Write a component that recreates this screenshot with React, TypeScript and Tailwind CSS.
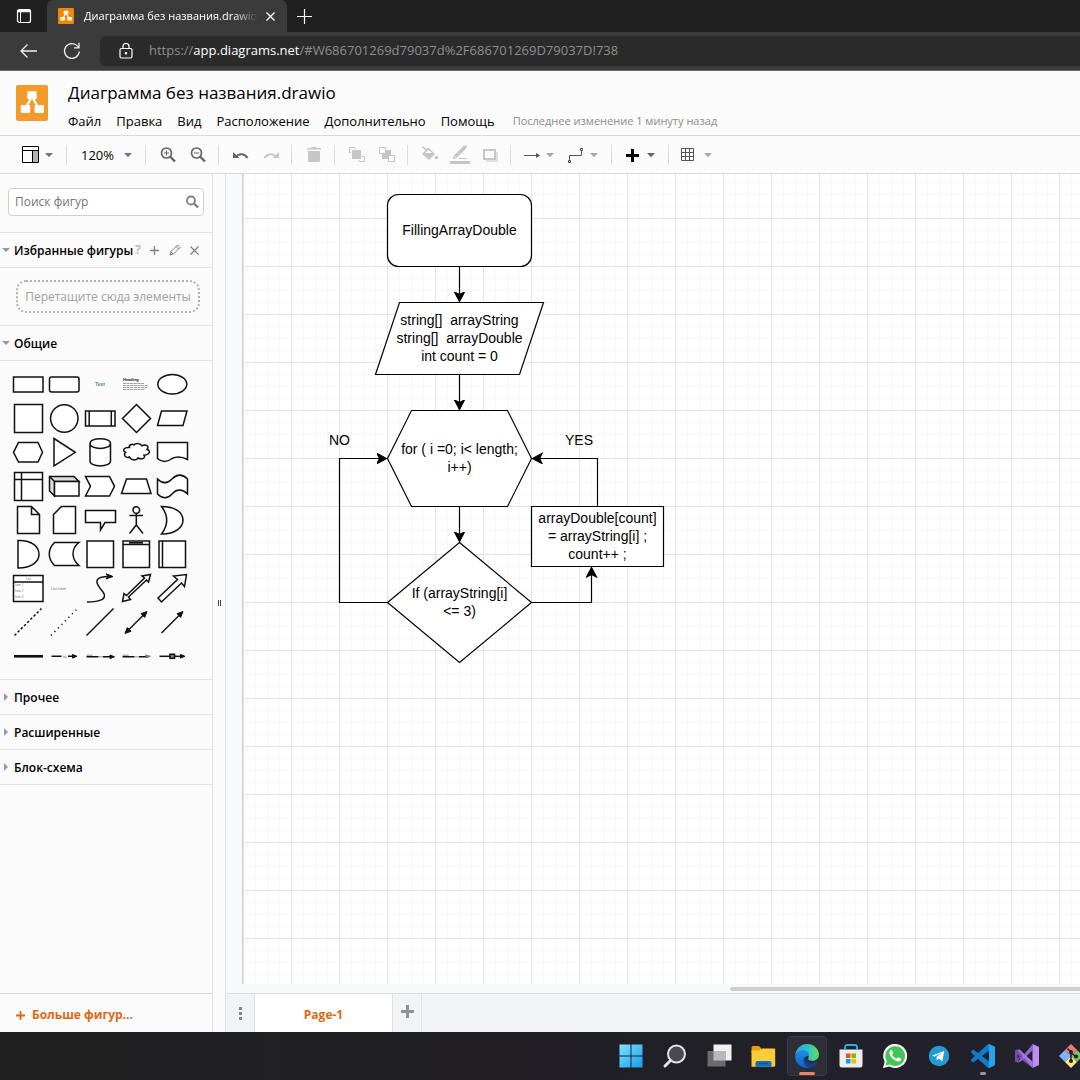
import React, { useState } from "react";

const INK = "#111";

function DrawioMark({ className, bg }: { className: string; bg: string }) {
  return (
    <svg className={className} viewBox="0 0 32 36" preserveAspectRatio="none" aria-hidden="true">
      <rect width="32" height="36" rx="2" fill={bg} />
      <path d="M15.8 12 9.5 23M16.2 12l6.3 11" stroke="#fff" strokeWidth="2.2" fill="none" />
      <rect x="11.3" y="6.3" width="9.4" height="8" rx="1.4" fill="#fff" />
      <rect x="4.8" y="20" width="9.4" height="8" rx="1.4" fill="#fff" />
      <rect x="18.6" y="20" width="9.4" height="8" rx="1.4" fill="#fff" />
    </svg>
  );
}

function Caret({ tone = "text-[#a8a8a8]" }: { tone?: string }) {
  return (
    <svg className={`h-2 w-2 shrink-0 ${tone}`} viewBox="0 0 8 8" aria-hidden="true">
      <path d="M0 2h8L4 6.3z" fill="currentColor" />
    </svg>
  );
}

function BrowserChrome() {
  return (
    <div className="bg-[#3b3b3b] text-white">
      <div className="flex h-8 items-stretch bg-[#202020]">
        <button aria-label="Вкладки" className="flex w-[47px] shrink-0 items-center justify-center">
          <svg width="16" height="16" viewBox="0 0 16 16" fill="none" stroke="#fff" aria-hidden="true">
            <rect x="1.5" y="1.5" width="13" height="13" rx="2" strokeWidth="1.2" />
            <path d="M1.5 3.5h13M1.5 2.5h13" strokeWidth="1.6" />
            <path d="M4.5 4v10" strokeWidth="1" />
          </svg>
        </button>
        <div className="flex w-60 items-center rounded-t-md bg-[#3b3b3b] pl-[11px]">
          <DrawioMark className="h-4 w-4 shrink-0" bg="#f08705" />
          <span className="ml-[10px] w-[174px] whitespace-nowrap text-[11px] [mask-image:linear-gradient(to_right,#000_86%,transparent)]">
            Диаграмма без названия.drawio
          </span>
          <button aria-label="Закрыть вкладку" className="ml-2">
            <svg width="9" height="9" viewBox="0 0 9 9" stroke="#fff" strokeWidth="1.3" aria-hidden="true">
              <path d="m.5.5 8 8m0-8-8 8" />
            </svg>
          </button>
        </div>
        <button aria-label="Новая вкладка" className="flex w-[35px] items-center justify-center">
          <svg width="15" height="15" viewBox="0 0 15 15" stroke="#fff" strokeWidth="1.2" aria-hidden="true">
            <path d="M7.5 0v15M0 7.5h15" />
          </svg>
        </button>
      </div>
      <div className="flex h-[39px] items-center border-b border-[#6b6b6b]">
        <button aria-label="Назад" className="flex w-14 shrink-0 items-center justify-center">
          <svg width="17" height="14" viewBox="0 0 17 14" fill="none" stroke="#eee" strokeWidth="1.3" aria-hidden="true">
            <path d="M17 7H1M7.5.5 1 7l6.500 6.500" />
          </svg>
        </button>
        <button aria-label="Обновить" className="flex w-8 shrink-0 items-center justify-center">
          <svg width="18" height="18" viewBox="0 0 18 18" fill="none" stroke="#eee" strokeWidth="1.3" aria-hidden="true">
            <path d="M16.300 9.500A7.400 7.400 0 1 1 14.600 4.200L16 5.800M16 .8v5h-5" />
          </svg>
        </button>
        <div className="ml-3 flex h-[30px] grow items-center rounded-l-md bg-[#2b2b2b] pl-[19px]">
          <svg className="shrink-0" width="14" height="16" viewBox="0 0 14 16" fill="none" stroke="#fff" strokeWidth="1.2" aria-hidden="true">
            <rect x="1" y="5.500" width="12" height="9.500" rx="1.500" />
            <path d="M4 5.500V3.500a3 3 0 0 1 6 0v2" />
            <circle cx="7" cy="10.300" r=".7" fill="#fff" />
          </svg>
          <a href="#diagram" className="ml-4 whitespace-nowrap text-[13px] text-[#8e8e8e]">
            https://<span className="text-white">app.diagrams.net</span>/#W686701269d79037d%2F686701269D79037D!738
          </a>
        </div>
      </div>
    </div>
  );
}

const MENUS = ["Файл", "Правка", "Вид", "Расположение", "Дополнительно", "Помощь"];

function AppHeader() {
  return (
    <header className="flex h-[65px] items-start border-b border-[#d9d9d9] pl-4">
      <DrawioMark className="mt-[14px] h-9 w-8 shrink-0" bg="#f29a2c" />
      <div className="ml-5 pt-2">
        <h1 className="text-[17px] leading-7 text-black">Диаграмма без названия.drawio</h1>
        <nav className="flex items-center gap-[15px] whitespace-nowrap text-[13px] leading-7">
          {MENUS.map((m) => (
            <button key={m}>{m}</button>
          ))}
          <span className="pl-[3px] text-[11px] text-[#8c8c8c]">Последнее изменение 1 минуту назад</span>
        </nav>
      </div>
    </header>
  );
}

function Group({ children }: { children: React.ReactNode }) {
  return <div className="flex h-5 items-center border-l border-[#dcdcdc] pr-[5px] pl-[7px]">{children}</div>;
}

function Tool({ label, tone = "text-[#c6c6c6]", children }: { label: string; tone?: string; children: React.ReactNode }) {
  return (
    <button aria-label={label} title={label} className={`flex w-[30px] justify-center ${tone}`}>
      <svg width="20" height="20" viewBox="0 0 20 20" fill="none" stroke="currentColor" aria-hidden="true">
        {children}
      </svg>
    </button>
  );
}

function MenuTool({ label, tone = "text-[#555]", caret, children }: { label: string; tone?: string; caret?: string; children: React.ReactNode }) {
  return (
    <button aria-label={label} title={label} className={`flex w-11 items-center gap-1 pl-1 ${tone}`}>
      <svg width="20" height="20" viewBox="0 0 20 20" fill="none" stroke="currentColor" aria-hidden="true">
        {children}
      </svg>
      <Caret tone={caret} />
    </button>
  );
}

function Toolbar() {
  return (
    <div className="flex h-[38px] items-center overflow-hidden border-b border-[#d9d9d9]">
      <button aria-label="Вид" className="flex w-[66px] shrink-0 items-center gap-[6px] pl-[22px]">
        <svg width="17" height="17" viewBox="0 0 17 17" fill="none" stroke="#000" aria-hidden="true">
          <rect x="11" y="5" width="5" height="11" fill="#b3b3b3" stroke="none" />
          <path d="M.5.5h16v16H.5zM.5 4.500h16M10.500 4.500v12" />
        </svg>
        <Caret tone="text-[#777]" />
      </button>
      <div className="flex h-5 w-[79px] items-center border-l border-[#dcdcdc] pl-[14px]">
        <button className="flex items-center gap-[10px] text-[13px]">
          <span className="pt-[3px]">120%</span> <Caret tone="text-[#777]" />
        </button>
      </div>
      <Group>
        <Tool label="Увеличить" tone="text-[#666]">
          <circle cx="8.500" cy="8" r="5" strokeWidth="1.700" />
          <path d="m12 11.500 5 5" strokeWidth="2.400" />
          <path d="M8.500 5.500v5M6 8h5" />
        </Tool>
        <Tool label="Уменьшить" tone="text-[#666]">
          <circle cx="8.500" cy="8" r="5" strokeWidth="1.700" />
          <path d="m12 11.500 5 5" strokeWidth="2.400" />
          <path d="M6 8h5" />
        </Tool>
      </Group>
      <Group>
        <Tool label="Отменить" tone="text-[#666]">
          <path d="M5 11.500c3-3.500 9-3 11.500 1.500" strokeWidth="2" />
          <path d="M2 7v6h6.500z" fill="currentColor" stroke="none" />
        </Tool>
        <Tool label="Повторить">
          <path d="M15 11.500c-3-3.500-9-3-11.500 1.500" strokeWidth="2" />
          <path d="M18 7v6h-6.500z" fill="currentColor" stroke="none" />
        </Tool>
      </Group>
      <Group>
        <Tool label="Удалить">
          <path d="M4 6h12v9.500a1.500 1.500 0 0 1-1.500 1.500h-9A1.500 1.500 0 0 1 4 15.500zM3 3h4l1-1h4l1 1h4v1.500H3z" fill="currentColor" stroke="none" />
        </Tool>
      </Group>
      <Group>
        <Tool label="На передний план">
          <path d="M2.500 8V2.500H8V4M17.500 11v5.500H12V15M2 7.500h2M17.500 11.500H15" />
          <rect x="5" y="5" width="9" height="9" fill="currentColor" stroke="none" />
        </Tool>
        <Tool label="На задний план">
          <rect x="5" y="5" width="9" height="9" fill="currentColor" stroke="none" />
          <rect x="2.500" y="2.500" width="6" height="6" fill="#fbfbfb" />
          <rect x="11.500" y="10.500" width="6" height="6" fill="#fbfbfb" />
        </Tool>
      </Group>
      <Group>
        <Tool label="Заливка">
          <path d="M2.500 1.500 10 8.500" strokeWidth="1.300" />
          <path d="M8 2.500 15 9 9 15 2 9z" fill="currentColor" stroke="none" />
          <path d="M5 8h7L8.500 5z" fill="#fbfbfb" stroke="none" />
          <circle cx="16.500" cy="12.500" r="1.800" fill="currentColor" stroke="none" />
        </Tool>
        <Tool label="Линия">
          <path d="m5 12 8.500-8.500" strokeWidth="3.500" />
          <path d="M14 3l1-1" strokeWidth="3.500" strokeLinecap="round" />
          <path d="M3 14v-3l3 3z" fill="currentColor" stroke="none" />
          <path d="M9 13.500h8" />
          <path d="M0 17.500h20" strokeWidth="3" />
        </Tool>
        <Tool label="Тень">
          <path d="M6 7h12v10H6z" fill="currentColor" opacity=".5" stroke="none" />
          <rect x="4" y="5" width="11" height="9" fill="#fbfbfb" strokeWidth="2" />
        </Tool>
      </Group>
      <Group>
        <MenuTool label="Соединение">
          <path d="M2 10.500h14" />
          <path d="M14 8v5l4-2.500z" fill="currentColor" stroke="none" />
        </MenuTool>
        <MenuTool label="Точки маршрута">
          <path d="M3.500 15.500v-5h12v-5" />
          <path d="M2.500 15.500h2v2h-2zM14.500 3.500h2v2h-2z" />
        </MenuTool>
      </Group>
      <Group>
        <MenuTool label="Вставить" tone="text-black" caret="text-[#666]">
          <path d="M9.500 4v13M3 10.500h13" strokeWidth="3" />
        </MenuTool>
      </Group>
      <Group>
        <MenuTool label="Таблица">
          <path d="M1.500 3.500h12v12h-12zM5.500 3.500v12M9.500 3.500v12M1.500 7.500h12M1.500 11.500h12" />
        </MenuTool>
      </Group>
    </div>
  );
}

const tiny = { fontFamily: "Liberation Sans, sans-serif" };

/* Each stencil is drawn around (0,0) in a 36 x 34 cell. */
const STENCILS: { name: string; art: React.ReactNode }[] = [
  { name: "Прямоугольник", art: <rect x="-14.500" y="-7" width="29.500" height="15" /> },
  { name: "Скруглённый прямоугольник", art: <rect x="-14.500" y="-7" width="29.500" height="15" rx="2" /> },
  { name: "Текст", art: <text x="0" y="2" fontSize="5" fontWeight="700" fill="#5b7fb5" stroke="none" textAnchor="middle" style={tiny}>Text</text> },
  {
    name: "Заголовок",
    art: (
      <g stroke="none" fill="#111">
        <text x="-13" y="-3.500" fontSize="4" fontWeight="700" style={tiny}>Heading</text>
        <path d="M-13-.5h21M-13 1.500h25M-13 3.500h24M-13 5.500h22" stroke="#777" strokeWidth=".7" strokeDasharray="3 .6" />
      </g>
    ),
  },
  { name: "Эллипс", art: <ellipse cx="0.300" cy="0.300" rx="14.500" ry="9.700" /> },
  { name: "Квадрат", art: <rect x="-13.500" y="-13.500" width="28" height="28" /> },
  { name: "Круг", art: <circle cx="0.300" cy=".5" r="13.700" /> },
  { name: "Процесс", art: <path d="M-14.500-7h29.500V8h-29.500zM-10.800-7V8M11.300-7V8" /> },
  { name: "Ромб", art: <path d="M.5-13.500 14.500.5.5 14.500-13.500.5z" /> },
  { name: "Параллелограмм", art: <path d="M-10.500-7h25.500L11 7.500h-25.500z" /> },
  { name: "Шестиугольник", art: <path d="M-9.500-9.500H10L14.500.3 10 10H-9.500L-14.500.3z" /> },
  { name: "Треугольник", art: <path d="M-10-13.500 11.300.3-10 14z" /> },
  { name: "Цилиндр", art: <path d="M-10-8.500c0-6.500 20.500-6.500 20.500 0V9c0 6.500-20.500 6.500-20.500 0zc0 6.500 20.500 6.500 20.500 0" /> },
  { name: "Облако", art: <path d="M-6.500-4.500c-5-.5-8 2.500-4 5-3 3 1.500 6 4 4.500 2 4 7.500 3.500 8.500 1 4 2 8 0 6-2.800 6-.7 7-4.700 3-5.700 3-3-1.500-6-5-3.700C4-9.500-1-9-2-7c-2-1.500-5.500 0-4.500 2.500z" /> },
  { name: "Документ", art: <path d="M-14.500-9.500h30V7.500C7 3 1 6 0 6.500c-5 4-10 4-14.500 0z" /> },
  { name: "Внутреннее хранилище", art: <path d="M-13.500-13.500h28v28h-28zM-6.500-13.500v28M-13.500-6.500h28" /> },
  {
    name: "Куб",
    art: (
      <>
        <path d="M-14.500-9.500h24.500l5 5H-9.500v14.500l-5-5z" fill="#ddd" />
        <path d="M-9.500-4.500h24.500V10H-9.500zM-14.500-9.500l5 5" />
      </>
    ),
  },
  { name: "Шаг", art: <path d="M-14.500-9.500H9.500L14.500.3 9.500 10h-24L-9.500.3z" /> },
  { name: "Трапеция", art: <path d="M-9.500-7H10.500L15 7.500h-29.500z" /> },
  { name: "Лента", art: <path d="M-14.500-7c5 5 10 4.500 14.500 0s10-5.500 15.500 0V8c-5.500-5.500-11-5-15.500 0s-9.500 5-14.500 0z" /> },
  { name: "Заметка", art: <path d="M-10.500-13.500H3.500l8 8v19h-22zM3.500-13.500v8h8" /> },
  { name: "Карточка", art: <path d="M-2.500-13.500h14v27h-22v-19z" /> },
  { name: "Выноска", art: <path d="M-14.500-9.500h30V2.500H5L.5 10V2.500h-15z" /> },
  {
    name: "Актёр",
    art: (
      <>
        <circle cx="0.300" cy="-10" r="3.300" />
        <path d="M.3-7V5M-6.500-4.500h13.500M.3 5l-6.800 8.500M.3 5l6.700 8.500" fill="none" />
      </>
    ),
  },
  { name: "Или", art: <path d="M-10.500-13.500C4-13.500 11-7 11 0s-7 14-21.500 14C-3 4-4-5-10.500-13.500z" /> },
  { name: "И", art: <path d="M-10-13.500C4-14 11-7 11 .3S4 14-10 14z" /> },
  { name: "Хранилище данных", art: <path d="M-9.500-11.500h24.500c-8 6-8 16 0 23h-24.500c-7-7-7-16 0-23z" /> },
  { name: "Контейнер", art: <rect x="-13" y="-13" width="26.500" height="26.500" /> },
  { name: "Контейнер с заголовком", art: <path d="M-13-13h26.500v26.500H-13zM-13-9.500h26.500M-7-11.300H7" /> },
  { name: "Вертикальный контейнер", art: <path d="M-13-13h26.500v26.500H-13zM-9.500-13v26.500" /> },
  {
    name: "Список",
    art: (
      <>
        <path d="M-14.500-12.500h29.500v26h-29.500zM-14.500-6h29.500" />
        <g stroke="none" fill="#777" fontSize="3" style={tiny}>
          <text x="-2" y="-8">List</text>
          <text x="-13" y="-2">Item 1</text>
          <text x="-13" y="4">Item 2</text>
          <text x="-13" y="10">Item 3</text>
        </g>
      </>
    ),
  },
  { name: "Элемент списка", art: <text x="-13" y="2" fontSize="4" fill="#777" stroke="none" style={tiny}>List Item</text> },
  {
    name: "Кривая",
    art: (
      <>
        <path d="M-13 14C0 14 8 11 3 4-3-3-9-11 8-11.500" fill="none" />
        <path d="m13-11.500-7-2.700 2 2.700-2 2.500z" fill={INK} strokeWidth="1" />
      </>
    ),
  },
  { name: "Двунаправленная стрелка", art: <path d="M14.500-13.500 12.500-6 10.500-8-7.500 9-5.500 11.500-13.500 13.500-12 5.500-9.500 7.500 8.500-10 6-12z" /> },
  { name: "Широкая стрелка", art: <path d="M14.500-13.500 12.500-1.500 9.500-5-10.500 14l-3.500-4L5.500-8.500 1.500-12z" /> },
  { name: "Пунктирная линия", art: <path d="M-13.500 13.500 13.500-13.500" strokeDasharray="2.500 2" /> },
  { name: "Точечная линия", art: <path d="M-13 13.500 13-13" strokeDasharray="1.200 3.800" /> },
  { name: "Линия", art: <path d="M-13.500 13.500 13.500-13.500" /> },
  {
    name: "Двунаправленный соединитель",
    art: (
      <>
        <path d="M-9 9.500 9-8.500" />
        <path d="m11-10.500-6 2.200 3.700 3.700zM-11 11.500l6-2.200-3.700-3.700z" fill={INK} strokeWidth="1" />
      </>
    ),
  },
  {
    name: "Направленный соединитель",
    art: (
      <>
        <path d="M-10.500 11 9-8.500" />
        <path d="m11-10.500-6 2.200 3.700 3.700z" fill={INK} strokeWidth="1" />
      </>
    ),
  },
  { name: "Связь", art: <path d="M-14 .3h29" strokeWidth="2.600" /> },
  {
    name: "Соединитель с подписью",
    art: (
      <>
        <path d="M-12.500.3h10M4 .3h6" />
        <path d="m13 .3-4.500-1.800v3.600z" fill={INK} strokeWidth="1" />
        <text x="-1.500" y="1.500" fontSize="3" stroke="none" fill="#777" style={tiny}>lab</text>
      </>
    ),
  },
  {
    name: "Соединитель с двумя подписями",
    art: (
      <>
        <path d="M-13.500.8h12M3 .8h9" />
        <path d="m14.500.8-4.500-1.800v3.600z" fill={INK} strokeWidth="1" />
        <path d="M-13.500-.8h6M-1 .8h4" strokeWidth=".8" stroke="#777" />
      </>
    ),
  },
  {
    name: "Соединитель с тремя подписями",
    art: (
      <>
        <path d="M-13.500.8h12M3 .8h9" />
        <path d="m14.500.3-5-1.500 1 3z" fill="#777" stroke="#777" strokeWidth=".8" />
        <path d="M-13.500-.8h6M-1 .8h4" strokeWidth=".8" stroke="#777" />
      </>
    ),
  },
  {
    name: "Соединитель с символом",
    art: (
      <>
        <path d="M-12.500.3H11" />
        <path d="m13 .3-4.500-1.800v3.600z" fill={INK} strokeWidth="1" />
        <rect x="-2" y="-1.700" width="4.500" height="4" strokeWidth="1.600" fill="#888" />
      </>
    ),
  },
];

function SectionHeader({ title, open, onToggle, children }: { title: string; open: boolean; onToggle: () => void; children?: React.ReactNode }) {
  return (
    <div className="flex h-[35px] items-center border-b border-[#e2e2e2] pr-[13px]">
      <button onClick={onToggle} aria-expanded={open} className="flex items-center gap-1 whitespace-nowrap pl-[2px] text-[12px] font-semibold text-black">
        <svg className="h-2 w-2 text-[#999]" viewBox="0 0 8 8" aria-hidden="true">
          <path d={open ? "M0 2h8L4 6z" : "M2 0v8l4-4z"} fill="currentColor" />
        </svg>
        <span className="pt-[2px]">{title}</span>
      </button>
      {children}
    </div>
  );
}

function Sidebar() {
  const [open, setOpen] = useState<Record<string, boolean>>({ fav: true, general: true });
  const toggle = (k: string) => setOpen((s) => ({ ...s, [k]: !s[k] }));
  return (
    <aside className="flex w-[213px] shrink-0 flex-col border-r border-[#dfdfdf] bg-[#fbfbfb]">
      <div className="border-b border-[#e2e2e2] px-2 pt-[14px] pb-4">
        <label className="flex h-7 items-center rounded border border-[#cfcfcf] bg-white pr-1 pl-[6px]">
          <input aria-label="Поиск фигур" placeholder="Поиск фигур" className="w-0 grow text-[12px] outline-none placeholder:text-[#767676]" />
          <svg width="14" height="14" viewBox="0 0 14 14" fill="none" stroke="#808080" aria-hidden="true">
            <circle cx="6" cy="5.500" r="4" strokeWidth="1.800" />
            <path d="m9 8.500 4 4" strokeWidth="2.400" />
          </svg>
        </label>
      </div>
      <SectionHeader title="Избранные фигуры" open={open.fav} onToggle={() => toggle("fav")}>
        <div className="flex grow items-center justify-between pl-[2px] text-[#808080]">
          <button aria-label="Справка" className="text-[12px] font-semibold text-[#b0b0b0]">?</button>
          <button aria-label="Добавить">
            <svg width="9" height="9" viewBox="0 0 9 9" stroke="currentColor" strokeWidth="1.300" aria-hidden="true"><path d="M4.500 0v9M0 4.500h9" /></svg>
          </button>
          <button aria-label="Редактировать">
            <svg width="12" height="12" viewBox="0 0 12 12" fill="none" stroke="currentColor" aria-hidden="true">
              <path d="M1 11l1-3.500L8.500 1l2.500 2.500L4.500 10zM7 2.500 9.500 5M2 8l2 2" />
            </svg>
          </button>
          <button aria-label="Закрыть">
            <svg width="9" height="9" viewBox="0 0 9 9" stroke="currentColor" strokeWidth="1.200" aria-hidden="true"><path d="m.5.5 8 8m0-8-8 8" /></svg>
          </button>
        </div>
      </SectionHeader>
      {open.fav && (
        <div className="border-b border-[#e2e2e2] pt-3 pr-3 pb-3 pl-4">
          <div className="flex h-[33px] items-center justify-center rounded-[10px] border-2 border-dotted border-[#b0b0b0] text-[12px] whitespace-nowrap text-[#a0a0a0]">
            Перетащите сюда элементы
          </div>
        </div>
      )}
      <SectionHeader title="Общие" open={open.general} onToggle={() => toggle("general")} />
      {open.general && (
        <div className="grid grid-cols-[repeat(5,36px)] border-b border-[#e2e2e2] py-[6px] pl-[10px]">
          {STENCILS.map((s) => (
            <button key={s.name} aria-label={s.name} className="h-[34px] w-9">
              <svg width="36" height="34" viewBox="-18 -17 36 34" fill="#fff" stroke={INK} strokeWidth="1.500" aria-hidden="true">
                {s.art}
              </svg>
            </button>
          ))}
        </div>
      )}
      <SectionHeader title="Прочее" open={!!open.misc} onToggle={() => toggle("misc")} />
      <SectionHeader title="Расширенные" open={!!open.adv} onToggle={() => toggle("adv")} />
      <SectionHeader title="Блок-схема" open={!!open.flow} onToggle={() => toggle("flow")} />
      <div className="mt-auto flex h-[39px] items-center border-t border-[#d6d6d6] pt-1 pl-4 text-[12px] font-bold text-[#db6a12]">
        <button className="flex items-center gap-[7px]">
          <svg width="9" height="9" viewBox="0 0 9 9" stroke="currentColor" strokeWidth="1.800" aria-hidden="true"><path d="M4.500 0v9M0 4.500h9" /></svg>
          Больше фигур...
        </button>
      </div>
    </aside>
  );
}

function Diagram() {
  return (
    <div className="absolute top-0 left-0 h-[500px] w-[430px] text-center font-['Liberation_Sans',Arial,sans-serif] text-[14px] leading-[18px] whitespace-pre text-black">
      <svg className="absolute inset-0" width="430" height="500" viewBox="0 0 430 500" fill="#fff" stroke="#000" strokeWidth="1.200" aria-hidden="true">
        <defs>
          <marker id="arrow" markerUnits="userSpaceOnUse" markerWidth="12" markerHeight="12" refX="10" refY="5.500" orient="auto">
            <path d="M.5.500 10 5.500.5 10.500 3 5.500z" fill="#000" stroke="#000" />
          </marker>
        </defs>
        <rect x="144.500" y="20.500" width="144" height="72" rx="11" />
        <path d="M156.500 128.500h144l-24 72h-144z" />
        <path d="M168.500 236.500h96l24 48-24 48h-96l-24-48z" />
        <path d="M216.500 368.500l72 60-72 60-72-60z" />
        <path d="M288.500 332.500h132v60h-132z" />
        <g fill="none">
          <path d="M216.500 92.500v35" markerEnd="url(#arrow)" />
          <path d="M216.500 200.500v35" markerEnd="url(#arrow)" />
          <path d="M216.500 332.500v35" markerEnd="url(#arrow)" />
          <path d="M144.500 428.500h-48v-144h47" markerEnd="url(#arrow)" />
          <path d="M288.500 428.500h60v-35" markerEnd="url(#arrow)" />
          <path d="M354.500 332.500v-48h-65" markerEnd="url(#arrow)" />
        </g>
      </svg>
      <div className="absolute top-5 left-36 flex h-[73px] w-[145px] items-center justify-center pb-[2px]">FillingArrayDouble</div>
      <div className="absolute top-32 left-36 flex h-[73px] w-[145px] items-center justify-center pb-[2px]">
        {"string[]  arrayString\nstring[]  arrayDouble\nint count = 0"}
      </div>
      <div className="absolute top-[236px] left-36 flex h-[97px] w-[145px] items-center justify-center pb-[2px]">{"for ( i =0; i< length;\ni++)"}</div>
      <div className="absolute top-[368px] left-36 flex h-[121px] w-[145px] items-center justify-center pb-[2px]">{"If (arrayString[i]\n<= 3)"}</div>
      <div className="absolute top-[332px] left-72 flex h-[61px] w-[133px] items-center justify-center pb-[2px]">{"arrayDouble[count]\n= arrayString[i] ;\ncount++ ;"}</div>
      <span className="absolute top-[257px] left-[86px]">NO</span>
      <span className="absolute top-[257px] left-[322px]">YES</span>
    </div>
  );
}

function Canvas() {
  return (
    <main className="flex min-w-0 grow flex-col border-l border-[#dfdfdf] bg-[#f8f9fb]">
      <div className="relative ml-4 grow overflow-hidden border-l border-[#d0d0d0] bg-white bg-[linear-gradient(to_right,#e3e3e3_1px,transparent_1px),linear-gradient(to_bottom,#e3e3e3_1px,transparent_1px),linear-gradient(to_right,#f7f7f7_1px,transparent_1px),linear-gradient(to_bottom,#f7f7f7_1px,transparent_1px)] bg-[size:48px_48px,48px_48px,12px_12px,12px_12px] bg-[position:0_44px,0_44px,0_8px,0_8px]">
        <Diagram />
      </div>
      <div className="flex h-[9px] items-center justify-end">
        <div className="h-1 w-[41%] rounded-l bg-[#cdcdcd]" />
      </div>
      <div className="flex h-[39px] border-t border-[#dadce0] bg-[#f1f3f4]">
        <button aria-label="Страницы" className="flex w-7 items-center justify-center">
          <svg width="3" height="13" viewBox="0 0 3 13" fill="#888" aria-hidden="true"><path d="M0 0h3v3H0zM0 5h3v3H0zM0 10h3v3H0z" /></svg>
        </button>
        <button className="w-[139px] border-x border-[#dfe1e4] bg-white pt-1 text-[12px] font-bold text-[#db6a12]">Page-1</button>
        <button aria-label="Добавить страницу" className="flex w-[29px] justify-center border-r border-[#dfe1e4] pt-[11px]">
          <svg width="13" height="13" viewBox="0 0 13 13" stroke="#919191" strokeWidth="3" aria-hidden="true"><path d="M6.500 0v13M0 6.500h13" /></svg>
        </button>
      </div>
    </main>
  );
}

const TASKS: { name: string; active?: boolean; running?: boolean; art: React.ReactNode }[] = [
  {
    name: "Пуск",
    art: (
      <>
        <defs><linearGradient id="win" x1="0" y1="0" x2="1" y2="1"><stop stopColor="#7be8ff" /><stop offset="1" stopColor="#1499f2" /></linearGradient></defs>
        <path d="M.5.5h11v11H.5zM12.500.5h11v11h-11zM.5 12.500h11v11H.5zM12.500 12.500h11v11h-11z" fill="url(#win)" />
      </>
    ),
  },
  {
    name: "Поиск",
    art: (
      <>
        <circle cx="13.500" cy="10" r="8.500" fill="#4a4950" stroke="#e2e5e8" strokeWidth="2" />
        <path d="m7.500 16.500-5.500 5.500" stroke="#e2e5e8" strokeWidth="3" strokeLinecap="round" />
      </>
    ),
  },
  {
    name: "Представление задач",
    art: (
      <>
        <path d="M6.500.5h18v16h-18z" fill="#f1f1f2" />
        <path d="M.5 7h18v15.500H.5z" fill="#6c6c6e" />
        <path d="M6.500 7h12v9.500h-12z" fill="#b9b9bb" />
      </>
    ),
  },
  {
    name: "Проводник",
    art: (
      <>
        <path d="M.5 3.500a1.500 1.500 0 0 1 1.500-1.500h6l2.500 2.500H10V9H.5z" fill="#e59d08" />
        <path d="M.5 6.500 9 6.300 11 4.500h12a1.200 1.200 0 0 1 1.200 1.200v15.800a1.200 1.200 0 0 1-1.200 1.200H.5z" fill="#fdcd38" />
        <path d="M4.500 22.700V19a2 2 0 0 1 2-2h12a2 2 0 0 1 2 2v3.700z" fill="#0c70c0" />
        <path d="M8 19.500h9" stroke="#0a4f94" strokeWidth="1.200" />
      </>
    ),
  },
  {
    name: "Edge",
    active: true,
    art: (
      <>
        <defs>
          <linearGradient id="edgeTop" x1="0" y1=".5" x2="1" y2=".5"><stop stopColor="#2aa5e8" /><stop offset=".55" stopColor="#2fc3cb" /><stop offset="1" stopColor="#66e04c" /></linearGradient>
          <linearGradient id="edgeBody" x1="0" y1="0" x2="0" y2="1"><stop stopColor="#1d8ee0" /><stop offset="1" stopColor="#1362c4" /></linearGradient>
        </defs>
        <path d="M.2 11.500C.8 5 5.800.1 12.200.1c6.600 0 11.700 5 11.700 10.300 0 4-3.100 6.300-6.500 6.300-3.600 0-4.800-1.500-4-3 .9-1.300.8-5.700-4.300-6.200C5 7.200 1.500 8.500.2 11.500z" fill="url(#edgeTop)" />
        <path d="M.1 12C.4 8.500 4.500 6 8.600 6.300c4 .2 6 3.500 5.300 6-4-1.300-6.500 3.700-3.700 7.700 1.300 1.900 3 3.200 4.700 3.700C6.500 25 0 19.500.1 12z" fill="url(#edgeBody)" />
        <path d="M9.300 12.800c-2.600 4.700.8 9.700 5.600 10.900 3.500-.5 6-2.700 7.500-5 .3-.5-.2-.9-.7-.6-5.500 2.700-12.300.7-12.400-5.300z" fill="#123f8e" />
      </>
    ),
  },
  {
    name: "Microsoft Store",
    art: (
      <>
        <path d="M6 6V3a2 2 0 0 1 2-2h8a2 2 0 0 1 2 2v3" fill="none" stroke="#28b1ee" strokeWidth="1.800" />
        <path d="M.5 5.500h23V21a2.500 2.500 0 0 1-2.500 2.500H3A2.500 2.500 0 0 1 .5 21z" fill="#eeeeee" />
        <path d="M6 6V3.500M18 6V3.500" stroke="#28b1ee" strokeWidth="1.800" />
        <path d="M7 9.500h4.500V14H7z" fill="#f25022" />
        <path d="M12.500 9.500H17V14h-4.500z" fill="#7fba00" />
        <path d="M7 15h4.500v4.500H7z" fill="#00a4ef" />
        <path d="M12.500 15H17v4.500h-4.500z" fill="#ffb900" />
      </>
    ),
  },
  {
    name: "WhatsApp",
    art: (
      <>
        <path d="M0 24l1.700-6.200A12 12 0 1 1 6.300 22.400z" fill="#fff" />
        <path d="M2.400 21.600l1.300-4.400A9.900 9.900 0 1 1 7 20.500z" fill="#46c557" />
        <path d="M8.700 6.300c-.6-.4-1.300-.1-1.800.6-1.300 2-.3 4.500 2.200 7.100 2.700 2.800 5.600 4.200 7.800 3.100 1.200-.6 1.500-1.700 1.200-2.300l-2.700-1.500c-.7-.2-1.100 1.400-1.900 1.400-1.500-.4-3.700-2.500-4.300-3.900-.1-.7 1.300-1.300 1-2z" fill="#fff" />
      </>
    ),
  },
  {
    name: "Telegram",
    art: (
      <>
        <circle cx="12" cy="12" r="10.200" fill="#259bd4" />
        <path d="M5 11.800 17.300 7l-2 10.200-3.500-2.600-1.900 1.900-.4-3.600 5.300-4.500-7 4.100z" fill="#fff" />
      </>
    ),
  },
  {
    name: "Visual Studio Code",
    running: true,
    art: (
      <>
        <path d="M23.150 2.587 18.210.21a1.494 1.494 0 0 0-1.705.29l-9.460 8.630-4.120-3.128a.999.999 0 0 0-1.276.057L.327 7.261A1 1 0 0 0 .326 8.740L3.899 12 .326 15.260a1 1 0 0 0 .001 1.479L1.650 17.940a.999.999 0 0 0 1.276.057l4.120-3.128 9.460 8.630a1.492 1.492 0 0 0 1.704.29l4.942-2.377A1.500 1.500 0 0 0 24 20.060V3.939a1.500 1.500 0 0 0-.85-1.352zm-5.146 14.861L10.826 12l7.178-5.448z" fill="#0b7fcb" />
        <path d="m18 .1 5.150 2.487A1.500 1.500 0 0 1 24 3.939V20.060a1.500 1.500 0 0 1-.85 1.352L18 23.900z" fill="#29a3ee" />
      </>
    ),
  },
  {
    name: "Visual Studio",
    art: (
      <>
        <path d="M0 6.500 2.500 5.200 5 6l12 12v5.500L4.500 14 2.500 18.600 0 17.500z" fill="#7650ad" />
        <path d="M2.500 10v4.500l2-2z" fill="#22212a" />
        <path d="M2.500 18.600 17.500.3V6.500L5 18z" fill="#9068cf" />
        <path d="M17.500 0 24 3v18l-6.500 3z" fill="#c08df3" />
        <path d="M4.500 5.500 17.500 17.500V24L2.500 6z" fill="#a674e0" />
      </>
    ),
  },
  {
    name: "Git",
    art: (
      <>
        <path d="M12 0l6 6-6 6-6-6z" fill="#f27c7c" />
        <path d="M6 6l6 6-6 6-6-6z" fill="#80b3ff" />
        <path d="M18 6l6 6-6 6-6-6z" fill="#7cc35c" />
        <path d="M12 12l6 6-6 6-6-6z" fill="#ffe680" />
        <path d="M8.500 4.500 12 8v9M12 9l5 3.500" stroke="#22212a" strokeWidth="1.500" fill="none" />
        <circle cx="12" cy="8" r="2" fill="#22212a" />
        <circle cx="12" cy="17" r="2" fill="#22212a" />
        <circle cx="17" cy="12.500" r="2" fill="#22212a" />
      </>
    ),
  },
];

function Taskbar() {
  return (
    <footer className="flex h-12 items-stretch overflow-hidden bg-linear-to-r from-[#202020] via-[#211f25] to-[#22222c] pl-[609px]">
      {TASKS.map((t) => (
        <button key={t.name} aria-label={t.name} className="relative flex w-11 shrink-0 items-center justify-center">
          {t.active && <span className="absolute inset-x-[2px] top-1 bottom-1 rounded border border-[#3c3c46] bg-[#2e2e38]" />}
          <svg className="relative" width="24" height="24" viewBox="0 0 24 24" overflow="visible" aria-hidden="true">{t.art}</svg>
          {t.active && <span className="absolute bottom-[5px] h-[3px] w-4 rounded bg-[#f08066]" />}
          {t.running && <span className="absolute bottom-[5px] h-[3px] w-[6px] rounded bg-[#9a9aa0]" />}
        </button>
      ))}
    </footer>
  );
}

export default function App() {
  return (
    <div className="flex min-h-screen flex-col overflow-hidden bg-[#fbfbfb] font-['Open_Sans','Noto_Sans',sans-serif] text-black">
      <BrowserChrome />
      <AppHeader />
      <Toolbar />
      <div className="flex grow items-stretch">
        <Sidebar />
        <div className="flex w-3 shrink-0 items-center justify-center gap-[1px]">
          <span className="h-[6px] w-px bg-[#444]" />
          <span className="h-[6px] w-px bg-[#444]" />
        </div>
        <Canvas />
      </div>
      <Taskbar />
    </div>
  );
}
